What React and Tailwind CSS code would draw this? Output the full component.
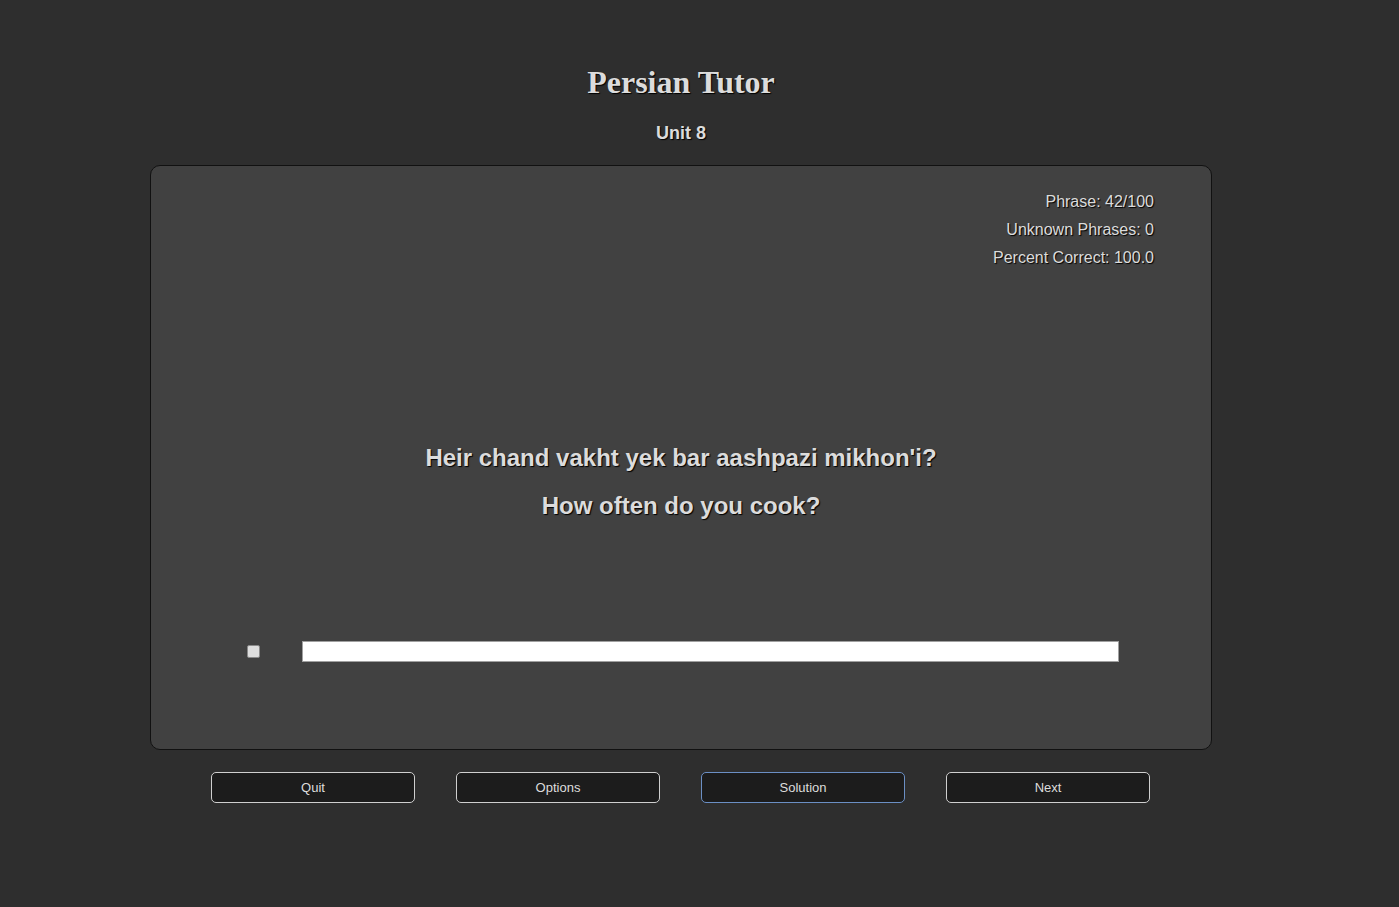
import React from 'react';

const shadow = "[text-shadow:1px_1px_1px_#000]";

export default function App() {
  return (
    <div className="min-h-[907px] w-full bg-[#2e2e2e] text-[#dcdcdc] font-['Liberation_Sans',Arial,sans-serif]">
      <div className="ml-[150px] w-[1062px] pt-[63px]">
        <h1 className={`text-center font-['Liberation_Serif',serif] text-[32px] font-bold leading-[38px] ${shadow}`}>
          Persian Tutor
        </h1>
        <h2 className={`mt-[21px] text-center text-[18px] font-bold leading-[22px] ${shadow}`}>Unit 8</h2>

        {/* Main card */}
        <div className="mt-[21px] h-[585px] rounded-[10px] border border-[#111] bg-[#414141] flex flex-col">
          <div className={`mt-[22px] mr-[57px] self-end text-right text-[16px] leading-[28px] ${shadow}`}>
            <div>Phrase: 42/100</div>
            <div>Unknown Phrases: 0</div>
            <div>Percent Correct: 100.0</div>
          </div>

          <div className={`mt-[162px] text-center text-[24px] font-bold leading-[48px] ${shadow}`}>
            <div>Heir chand vakht yek bar aashpazi mikhon'i?</div>
            <div>How often do you cook?</div>
          </div>

          <div className="mt-[111px] flex items-center">
            <input
              type="checkbox"
              className="ml-[96px] h-[13px] w-[13px] appearance-none rounded-[2px] border border-[#8a8a8a] bg-[#dedede]"
            />
            <input
              type="text"
              className="ml-[42px] h-[21px] w-[817px] border border-[#a0a0a0] bg-white outline-none"
            />
          </div>
        </div>

        {/* Buttons */}
        <div className="mt-[22px] flex pl-[61px] gap-[41px]">
          {['Quit', 'Options', 'Solution', 'Next'].map((b) => (
            <button
              key={b}
              className={`h-[31px] w-[204px] rounded-[5px] border bg-[#1c1c1c] text-[13px] text-[#dcdcdc] ${
                b === 'Solution' ? 'border-[#6b8fc4]' : 'border-[#cfcfcf]'
              }`}
            >
              {b}
            </button>
          ))}
        </div>
      </div>
    </div>
  );
}
